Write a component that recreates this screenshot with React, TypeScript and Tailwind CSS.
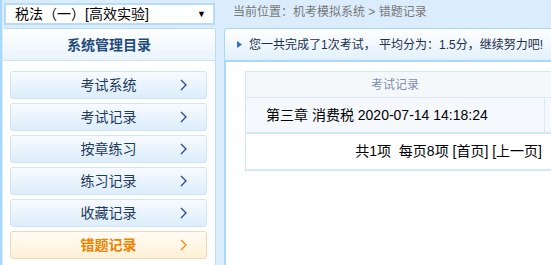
import React from "react";

const items = ["考试系统", "考试记录", "按章练习", "练习记录", "收藏记录", "错题记录"];

function Chevron({ color }: { color: string }) {
  return (
    <svg width="7" height="12" viewBox="0 0 7 12" className="shrink-0">
      <path d="M1 1 L6 6 L1 11" fill="none" stroke={color} strokeWidth="1.2" />
    </svg>
  );
}

export default function App() {
  return (
    <div
      className="w-[551px] h-[265px] bg-[#dbedfc] flex overflow-hidden"
      style={{ fontFamily: '"Liberation Sans", "Noto Sans CJK SC", sans-serif' }}
    >
      {/* left */}
      <div className="w-[216px] shrink-0 flex flex-col border-l-2 border-[#a8d8fb]">
        <div className="h-[28px] pt-[3px] pl-[2px] pr-[1px]">
          <div className="h-[22px] bg-white border-2 border-[#b5dcfa] flex items-center justify-between pl-[9px] pr-[7px]">
            <span className="text-[14px] leading-none text-black">税法（一）[高效实验]</span>
            <span className="text-[9px] leading-none text-black">▼</span>
          </div>
        </div>
        <div className="flex-1 flex flex-col bg-white border-r border-t border-[#b9ddf8] rounded-tr-[3px] rounded-tl-[3px] ml-[1px]">
          <div className="h-[32px] shrink-0 flex items-center justify-center bg-gradient-to-b from-white to-[#e8f3fc] border-b border-[#cfe5f6]">
            <span className="text-[14px] font-bold text-[#1f4b7a] leading-none">系统管理目录</span>
          </div>
          <div className="flex flex-col gap-[4px] pt-[10px] pl-[7px] pr-[8px]">
            {items.map((t) => {
              const active = t === "错题记录";
              return (
                <div
                  key={t}
                  className={
                    active
                      ? "h-[28px] rounded-[3px] border border-[#f2d6b8] bg-gradient-to-b from-[#fffcf6] to-[#fff0d6] flex items-center"
                      : "h-[28px] rounded-[3px] border border-[#cfe4f5] bg-gradient-to-b from-[#f8fbfe] to-[#dcedfb] flex items-center"
                  }
                >
                  <span
                    className={
                      active
                        ? "flex-1 text-center pl-[32px] text-[14px] font-bold text-[#f08200]"
                        : "flex-1 text-center pl-[32px] text-[14px] text-[#1e3a5c]"
                    }
                  >
                    {t}
                  </span>
                  <div className="w-[32px] flex justify-start pl-[6px]">
                    <Chevron color={active ? "#f08a00" : "#27408b"} />
                  </div>
                </div>
              );
            })}
          </div>
        </div>
      </div>

      {/* right */}
      <div className="flex-1 flex flex-col ml-[8px] min-w-0">
        <div className="h-[28px] shrink-0 flex items-center pl-[9px] pb-[4px]">
          <span className="text-[12px] text-[#777] leading-none">当前位置：机考模拟系统 &gt; 错题记录</span>
        </div>
        <div className="h-[32px] shrink-0 flex items-center pl-[12px] border-l border-t border-[#a8d8fb] rounded-tl-[4px] bg-gradient-to-b from-white to-[#e2f0fc] whitespace-nowrap overflow-hidden">
          <svg width="5" height="7" viewBox="0 0 5 7" className="mr-[7px] shrink-0">
            <path d="M0 0 L5 3.5 L0 7 Z" fill="#2a6fc9" />
          </svg>
          <span className="text-[12px] text-[#1a2f4a] leading-none">您一共完成了1次考试， 平均分为：1.5分，继续努力吧!</span>
        </div>
        <div className="flex-1 bg-white border-l-2 border-t-2 border-[#a8d8fb] pl-[19px] pt-[9px] overflow-hidden">
          <div className="w-[340px] border border-[#d3e8f7] border-b-2">
            <div className="h-[26px] flex items-center justify-center bg-[#f5f8fb] border-b border-[#dce9f4]">
              <span className="text-[12px] text-[#7d8fb0] pr-[40px]">考试记录</span>
            </div>
            <div className="h-[36px] flex bg-[#f5f9fd] border-b-2 border-[#d3e8f7]">
              <div className="w-[299px] flex items-center pl-[20px] border-r border-[#dbe9f5]">
                <span className="text-[14px] text-black whitespace-nowrap">第三章 消费税 2020-07-14 14:18:24</span>
              </div>
              <div className="flex-1" />
            </div>
            <div className="h-[35px] flex items-center">
              <span className="w-[296px] text-right text-[14px] text-black whitespace-nowrap">
                共1项&nbsp;&nbsp;每页8项 [首页] [上一页]
              </span>
            </div>
          </div>
        </div>
      </div>
    </div>
  );
}
